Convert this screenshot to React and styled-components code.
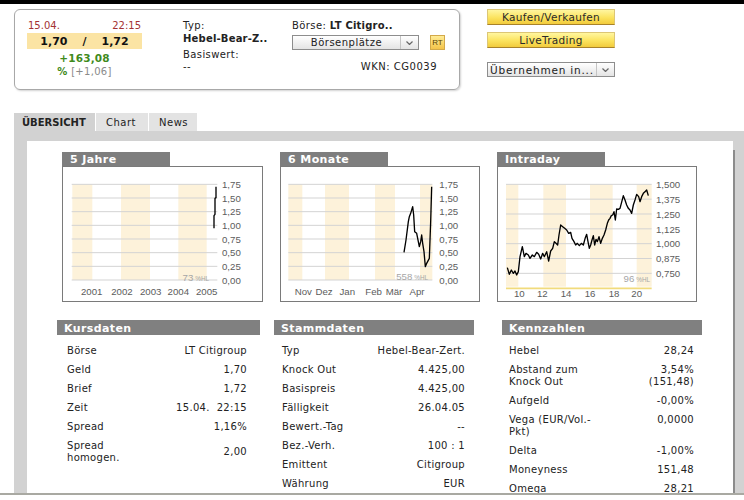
import React from 'react';
import styled, { createGlobalStyle } from 'styled-components';

const Global = createGlobalStyle`
  html, body { margin: 0; padding: 0; background: #fff; }
  body {
    font-family: "DejaVu Sans", Verdana, sans-serif;
    font-size: 10px;
    color: #222;
    overflow: hidden;
  }
  #root { width: 744px; height: 500px; overflow: hidden; }
`;

const Page = styled.div`
  width: 744px;
  height: 500px;
  display: flex;
  flex-direction: column;
`;

const TopBar = styled.div`
  height: 4px;
  background: #000;
  flex: none;
`;

const Header = styled.div`
  display: flex;
  align-items: flex-start;
  padding: 5px 0 0 14px;
  margin-bottom: 23px;
  flex: none;
`;

const QuoteBox = styled.div`
  width: 446px;
  height: 81px;
  box-sizing: border-box;
  border: 1px solid #a8a8a8;
  border-radius: 6px;
  box-shadow: 1px 1px 2px rgba(0, 0, 0, 0.18);
  display: flex;
  padding: 10px 0 0 12px;
`;

const PriceCol = styled.div`
  width: 115px;
  display: flex;
  flex-direction: column;
`;

const DateRow = styled.div`
  display: flex;
  justify-content: space-between;
  line-height: 12px;
  height: 12px;
  color: #a33232;
  padding: 0 1px;
`;

const PriceBand = styled.div`
  margin-top: 1px;
  height: 16px;
  line-height: 17px;
  background: #fbe4a4;
  font-weight: bold;
  font-size: 11px;
  display: flex;
  justify-content: center;
  gap: 15px;
  color: #111;
`;

const Change = styled.div`
  margin-top: 2px;
  line-height: 14px;
  text-align: center;
  color: #3f8a1c;
  font-weight: bold;
  font-size: 10.5px;
  letter-spacing: 0.2px;
`;

const PctRow = styled.div`
  line-height: 14px;
  text-align: center;
  letter-spacing: 0.3px;
`;

const Pct = styled.span`
  color: #3f8a1c;
  font-weight: bold;
`;

const PctVal = styled.span`
  color: #8a8a8a;
`;

const InfoCol = styled.div`
  margin-left: 41px;
  width: 109px;
  display: flex;
  flex-direction: column;
`;

const InfoLabel = styled.div`
  line-height: 12px;
  letter-spacing: 0.4px;
  margin-top: ${p => p.$mt || 0}px;
`;

const InfoValue = styled.div`
  line-height: 14px;
  font-weight: bold;
  letter-spacing: 0.2px;
`;

const ExchangeCol = styled.div`
  width: 153px;
  display: flex;
  flex-direction: column;
`;

const ExchangeLine = styled.div`
  line-height: 12px;
  letter-spacing: 0.4px;
  & b { letter-spacing: 0.2px; }
`;

const SelectRow = styled.div`
  margin-top: 3px;
  display: flex;
  align-items: center;
  gap: 11px;
`;

const Select = styled.div`
  width: ${p => p.$w}px;
  height: 15px;
  box-sizing: border-box;
  border: 1px solid #8d8d8d;
  background: linear-gradient(#ffffff, #e4e4e4);
  display: flex;
  font-size: ${p => p.$fs || 10}px;
  letter-spacing: ${p => p.$ls || 0.5}px;
  color: #222;
`;

const SelectLabel = styled.div`
  flex: 1;
  text-align: center;
  line-height: 14px;
`;

const SelectArrow = styled.div`
  width: 17px;
  border-left: 1px solid #c4c4c4;
  display: flex;
  align-items: center;
  justify-content: center;
`;

const RtBadge = styled.div`
  width: 15px;
  height: 15px;
  box-sizing: border-box;
  border: 1px solid #d3a94a;
  background: linear-gradient(#ffec95, #f4c44a);
  font-family: "Liberation Sans", Arial, sans-serif;
  font-size: 8px;
  line-height: 13px;
  text-align: center;
  color: #5a4300;
`;

const Wkn = styled.div`
  margin-top: 11px;
  margin-right: 8px;
  text-align: right;
  line-height: 12px;
  letter-spacing: 0.5px;
`;

const ActionsCol = styled.div`
  margin-left: 27px;
  width: 128px;
  display: flex;
  flex-direction: column;
`;

const YellowButton = styled.div`
  height: 16px;
  box-sizing: border-box;
  border: 1px solid #dcc675;
  border-bottom-color: #a8822a;
  background: linear-gradient(#fff6a0, #fbe35e 55%, #f2cb3c);
  text-align: center;
  line-height: 15px;
  font-size: 10.5px;
  letter-spacing: 0.3px;
  color: #2a2a2a;
  margin-bottom: ${p => p.$mb || 0}px;
`;

const TabsRow = styled.div`
  display: flex;
  margin-left: 14px;
  height: 18px;
  flex: none;
`;

const Tab = styled.div`
  width: ${p => p.$w}px;
  height: 18px;
  line-height: 20px;
  box-sizing: border-box;
  padding-left: ${p => p.$pl}px;
  margin-right: 1px;
  background: ${p => (p.$active ? '#d2d2d2' : '#e3e3e3')};
  font-weight: ${p => (p.$active ? 'bold' : 'normal')};
  letter-spacing: ${p => (p.$active ? 0 : 0.5)}px;
  color: #222;
`;

const Panel = styled.div`
  margin-left: 14px;
  height: 362px;
  flex: none;
  background:
    linear-gradient(#8c8c8c, #8c8c8c) no-repeat right 9px top 19px / 2px calc(100% - 19px),
    #d2d2d2;
  padding: 10px 11px 0 13px;
  box-sizing: border-box;
  display: flex;
`;

const Content = styled.div`
  flex: 1;
  background: #fff;
  padding-top: 11px;
  overflow: hidden;
`;

const FooterRule = styled.div`
  height: 2px;
  background: #a9a9a2;
  flex: none;
`;

const ChartsRow = styled.div`
  display: flex;
  gap: 17px;
  padding-left: 35px;
`;

const ChartCard = styled.div`
  width: ${p => p.$w}px;
  display: flex;
  flex-direction: column;
`;

const SectionTab = styled.div`
  width: 108px;
  height: 14px;
  line-height: 16px;
  background: #7e7e7e;
  color: #fff;
  font-weight: bold;
  font-size: 11px;
  letter-spacing: 0.4px;
  padding-left: 8px;
  box-sizing: border-box;
`;

const ChartBox = styled.div`
  height: 136px;
  box-sizing: border-box;
  border: 1px solid #7a7a7a;
  background: #fff;
  & svg { display: block; }
`;

const TablesRow = styled.div`
  margin-top: 18px;
  display: flex;
  padding-left: 30px;
`;

const DataTable = styled.div`
  width: ${p => p.$w}px;
  margin-left: ${p => p.$ml || 0}px;
`;

const TableHead = styled.div`
  height: 15px;
  line-height: 17px;
  background: #808080;
  color: #fff;
  font-weight: bold;
  font-size: 11px;
  letter-spacing: 0.4px;
  padding-left: 7px;
`;

const Rows = styled.div`
  padding-top: 6px;
`;

const Row = styled.div`
  display: flex;
  justify-content: space-between;
  align-items: ${p => (p.$center ? 'center' : 'flex-start')};
  padding: 4px ${p => p.$pr}px 3px ${p => p.$pl}px;
  line-height: 12px;
  letter-spacing: 0.3px;
`;

const Cell = styled.div`
  white-space: pre;
  text-align: ${p => (p.$right ? 'right' : 'left')};
`;

const STRIPE = '#fdf2da';
const GRID = '#d3d3d3';
const AXIS = '#5c5c5c';
const FONT = 'Liberation Sans, Arial, sans-serif';

function Chart({ title, w, ox, oy, stripes, stripeTop, stripeBottom, gridX, gridYs, yLabelX, yLabels, xLabels, xLabelY, hl, line, baseline }) {
  const iw = w - 2;
  const ih = 134;
  return (
    <ChartCard $w={w}>
      <SectionTab>{title}</SectionTab>
      <ChartBox>
        <svg width={iw} height={ih} viewBox={`${ox} ${oy} ${iw * 3} ${ih * 3}`}>
          {stripes.map(([a, b], i) => (
            <rect key={i} x={a} y={stripeTop} width={b - a} height={stripeBottom - stripeTop} fill={STRIPE} />
          ))}
          {gridYs.map((y, i) => (
            <line key={i} x1={gridX[0]} x2={gridX[1]} y1={y} y2={y} stroke={GRID} strokeWidth="3" />
          ))}
          {baseline && (
            <line x1={gridX[0]} x2={gridX[1]} y1={baseline} y2={baseline} stroke="#f1db7c" strokeWidth="5" />
          )}
          {yLabels.map((t, i) => (
            <text key={t} x={yLabelX} y={gridYs[i] + 11} fontFamily={FONT} fontSize="29" fill={AXIS}>{t}</text>
          ))}
          {xLabels.map(([x, t]) => (
            <text key={t} x={x} y={xLabelY + 11} textAnchor="middle" fontFamily={FONT} fontSize="29" fill={AXIS}>{t}</text>
          ))}
          <text x={hl.x} y={hl.y + 10} textAnchor="end" fontFamily={FONT} fontSize="29" fill="#a6a6a6">
            {hl.n}
            <tspan fontSize="19" dx="6">%HL</tspan>
          </text>
          <polyline points={line.map(p => p.join(',')).join(' ')} fill="none" stroke="#000" strokeWidth="4" strokeLinejoin="round" />
        </svg>
      </ChartBox>
    </ChartCard>
  );
}

const range = (n, start, step) => Array.from({ length: n }, (_, i) => start + i * step);

const charts = [
  {
    title: '5 Jahre',
    w: 201,
    ox: 24,
    oy: 66,
    stripes: [[52, 112], [198, 285], [370, 455]],
    stripeTop: 118,
    stripeBottom: 405,
    gridX: [50, 487],
    gridYs: range(8, 118, 41),
    yLabelX: 501,
    yLabels: ['1,75', '1,50', '1,25', '1,00', '0,75', '0,50', '0,25', '0,00'],
    xLabels: [[110, '2001'], [201, '2002'], [287, '2003'], [370, '2004'], [455, '2005']],
    xLabelY: 440,
    hl: { n: '73', x: 462, y: 398 },
    line: [[483, 125], [483, 158], [480, 160], [480, 208], [477, 212], [477, 250]],
  },
  {
    title: '6 Monate',
    w: 200,
    ox: 33,
    oy: 66,
    stripes: [[55, 97], [165, 237], [315, 375], [450, 487]],
    stripeTop: 118,
    stripeBottom: 405,
    gridX: [55, 487],
    gridYs: range(8, 118, 41),
    yLabelX: 508,
    yLabels: ['1,75', '1,50', '1,25', '1,00', '0,75', '0,50', '0,25', '0,00'],
    xLabels: [[100, 'Nov'], [162, 'Dez'], [232, 'Jan'], [311, 'Feb'], [372, 'Mär'], [441, 'Apr']],
    xLabelY: 440,
    hl: { n: '558', x: 474, y: 396 },
    line: [[402, 322], [408, 285], [415, 230], [418, 215], [422, 205], [428, 185], [431, 210], [434, 260], [440, 265], [448, 305], [452, 290], [455, 270], [458, 295], [462, 320], [466, 365], [470, 355], [478, 340], [482, 230], [485, 125]],
  },
  {
    title: 'Intraday',
    w: 200,
    ox: 24,
    oy: 66,
    stripes: [[48, 85], [160, 228], [300, 368], [440, 485]],
    stripeTop: 118,
    stripeBottom: 425,
    gridX: [48, 485],
    gridYs: range(7, 118, 44.5),
    yLabelX: 498,
    yLabels: ['1,500', '1,375', '1,250', '1,125', '1,000', '0,875', '0,750'],
    xLabels: [[88, '10'], [157, '12'], [228, '14'], [300, '16'], [372, '18'], [440, '20']],
    xLabelY: 446,
    baseline: 430,
    hl: { n: '96', x: 480, y: 400 },
    line: [[52, 368], [58, 388], [64, 375], [70, 385], [75, 378], [80, 390], [85, 380], [90, 335], [97, 305], [103, 335], [108, 325], [115, 330], [120, 340], [127, 330], [133, 335], [140, 322], [146, 328], [152, 342], [158, 325], [163, 335], [170, 320], [176, 348], [182, 318], [188, 310], [193, 290], [198, 295], [203, 300], [207, 270], [212, 240], [218, 245], [224, 250], [230, 255], [236, 265], [242, 262], [246, 280], [252, 290], [257, 300], [262, 295], [268, 302], [274, 295], [280, 300], [286, 278], [290, 268], [294, 290], [298, 310], [302, 300], [306, 285], [310, 272], [314, 300], [318, 283], [322, 290], [327, 275], [332, 295], [337, 280], [342, 270], [347, 255], [352, 235], [356, 225], [360, 220], [364, 212], [368, 210], [372, 200], [376, 225], [380, 192], [385, 193], [390, 190], [394, 175], [400, 152], [405, 165], [410, 180], [415, 190], [420, 195], [425, 205], [430, 180], [435, 165], [440, 148], [446, 155], [450, 170], [455, 155], [460, 145], [465, 140], [470, 135], [475, 152]],
  },
];

const tables = [
  {
    title: 'Kursdaten',
    w: 203,
    ml: 0,
    pl: 10,
    pr: 13,
    rows: [
      ['Börse', 'LT Citigroup'],
      ['Geld', '1,70'],
      ['Brief', '1,72'],
      ['Zeit', '15.04.  22:15'],
      ['Spread', '1,16%'],
      ['Spread\nhomogen.', '2,00', true],
    ],
  },
  {
    title: 'Stammdaten',
    w: 200,
    ml: 14,
    pl: 8,
    pr: 9,
    rows: [
      ['Typ', 'Hebel-Bear-Zert.'],
      ['Knock Out', '4.425,00'],
      ['Basispreis', '4.425,00'],
      ['Fälligkeit', '26.04.05'],
      ['Bewert.-Tag', '--'],
      ['Bez.-Verh.', '100 : 1'],
      ['Emittent', 'Citigroup'],
      ['Währung', 'EUR'],
    ],
  },
  {
    title: 'Kennzahlen',
    w: 200,
    ml: 28,
    pl: 7,
    pr: 8,
    rows: [
      ['Hebel', '28,24'],
      ['Abstand zum\nKnock Out', '3,54%\n(151,48)'],
      ['Aufgeld', '-0,00%'],
      ['Vega (EUR/Vol.-\nPkt)', '0,0000'],
      ['Delta', '-1,00%'],
      ['Moneyness', '151,48'],
      ['Omega', '28,21'],
    ],
  },
];

function Arrow() {
  return (
    <svg width="7" height="4" viewBox="0 0 7 4">
      <path d="M0.5 0.5 L3.5 3.5 L6.5 0.5" fill="none" stroke="#666" strokeWidth="1.2" />
    </svg>
  );
}

export default function App() {
  return (
    <Page>
      <Global />
      <TopBar />
      <Header>
        <QuoteBox>
          <PriceCol>
            <DateRow>
              <span>15.04.</span>
              <span>22:15</span>
            </DateRow>
            <PriceBand>
              <span>1,70</span>
              <span>/</span>
              <span>1,72</span>
            </PriceBand>
            <Change>+163,08</Change>
            <PctRow>
              <Pct>%</Pct> <PctVal>[+1,06]</PctVal>
            </PctRow>
          </PriceCol>
          <InfoCol>
            <InfoLabel>Typ:</InfoLabel>
            <InfoValue>Hebel-Bear-Z..</InfoValue>
            <InfoLabel $mt={3}>Basiswert:</InfoLabel>
            <InfoLabel>--</InfoLabel>
          </InfoCol>
          <ExchangeCol>
            <ExchangeLine>
              Börse: <b>LT Citigro..</b>
            </ExchangeLine>
            <SelectRow>
              <Select $w={127}>
                <SelectLabel>Börsenplätze</SelectLabel>
                <SelectArrow>
                  <Arrow />
                </SelectArrow>
              </Select>
              <RtBadge>RT</RtBadge>
            </SelectRow>
            <Wkn>WKN: CG0039</Wkn>
          </ExchangeCol>
        </QuoteBox>
        <ActionsCol>
          <YellowButton $mb={7}>Kaufen/Verkaufen</YellowButton>
          <YellowButton $mb={14}>LiveTrading</YellowButton>
          <Select $w={128} $fs={10.5} $ls={0.8}>
            <SelectLabel>Übernehmen in...</SelectLabel>
            <SelectArrow>
              <Arrow />
            </SelectArrow>
          </Select>
        </ActionsCol>
      </Header>
      <TabsRow>
        <Tab $active $w={81} $pl={8}>ÜBERSICHT</Tab>
        <Tab $w={52} $pl={10}>Chart</Tab>
        <Tab $w={48} $pl={10}>News</Tab>
      </TabsRow>
      <Panel>
        <Content>
          <ChartsRow>
            {charts.map(c => (
              <Chart key={c.title} {...c} />
            ))}
          </ChartsRow>
          <TablesRow>
            {tables.map(t => (
              <DataTable key={t.title} $w={t.w} $ml={t.ml}>
                <TableHead>{t.title}</TableHead>
                <Rows>
                  {t.rows.map(([label, value, center]) => (
                    <Row key={label} $pl={t.pl} $pr={t.pr} $center={center}>
                      <Cell>{label}</Cell>
                      <Cell $right>{value}</Cell>
                    </Row>
                  ))}
                </Rows>
              </DataTable>
            ))}
          </TablesRow>
        </Content>
      </Panel>
      <FooterRule />
    </Page>
  );
}
